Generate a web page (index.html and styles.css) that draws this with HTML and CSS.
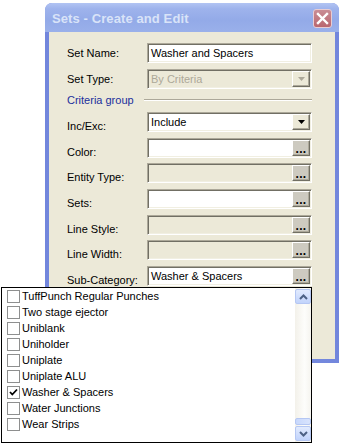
FILE: index.html
```html
<!DOCTYPE html>
<html>
<head>
<meta charset="utf-8">
<link rel="stylesheet" href="styles.css">
</head>
<body>
<div class="window">
  <div class="titlebar">
    <span class="title">Sets - Create and Edit</span>
    <span class="close"><svg width="13" height="13" viewBox="0 0 13 13"><path d="M2 2 L11 11 M11 2 L2 11" stroke="#fff" stroke-width="2.4" stroke-linecap="square"/></svg></span>
  </div>
  <div class="client">
    <div class="top">
      <div class="row"><span class="label">Set Name:</span><div class="field">Washer and Spacers</div></div>
      <div class="row"><span class="label">Set Type:</span><div class="field disabled"><span class="val">By Criteria</span><span class="dd dis"><svg width="7" height="4" viewBox="0 0 7 4"><path d="M0 0H7L3.5 4Z" fill="#aca899"/></svg></span></div></div>
    </div>
    <div class="group"><span class="gtext">Criteria group</span><span class="rule"></span></div>
    <div class="crit">
      <div class="row"><span class="label">Inc/Exc:</span><div class="field"><span class="val">Include</span><span class="dd"><svg width="7" height="4" viewBox="0 0 7 4"><path d="M0 0H7L3.5 4Z" fill="#000"/></svg></span></div></div>
      <div class="row"><span class="label">Color:</span><div class="field"><span class="val"></span><span class="btn">...</span></div></div>
      <div class="row"><span class="label">Entity Type:</span><div class="field disabled"><span class="val"></span><span class="btn">...</span></div></div>
      <div class="row"><span class="label">Sets:</span><div class="field"><span class="val"></span><span class="btn">...</span></div></div>
      <div class="row"><span class="label">Line Style:</span><div class="field disabled"><span class="val"></span><span class="btn">...</span></div></div>
      <div class="row"><span class="label">Line Width:</span><div class="field disabled"><span class="val"></span><span class="btn">...</span></div></div>
      <div class="row"><span class="label">Sub-Category:</span><div class="field"><span class="val">Washer &amp; Spacers</span><span class="btn">...</span></div></div>
    </div>
  </div>
</div>
<div class="popup">
  <div class="items">
    <div class="item"><span class="cb"></span>TuffPunch Regular Punches</div>
    <div class="item"><span class="cb"></span>Two stage ejector</div>
    <div class="item"><span class="cb"></span>Uniblank</div>
    <div class="item"><span class="cb"></span>Uniholder</div>
    <div class="item"><span class="cb"></span>Uniplate</div>
    <div class="item"><span class="cb"></span>Uniplate ALU</div>
    <div class="item"><span class="cb"><svg width="11" height="11" viewBox="0 0 11 11"><path d="M2 5 L4.3 7.5 L9 2.5" fill="none" stroke="#000" stroke-width="1.8"/></svg></span>Washer &amp; Spacers</div>
    <div class="item"><span class="cb"></span>Water Junctions</div>
    <div class="item"><span class="cb"></span>Wear Strips</div>
  </div>
  <div class="scrollbar">
    <div class="sbtn"><svg width="9" height="6" viewBox="0 0 9 6"><path d="M1 5 L4.5 1.5 L8 5" fill="none" stroke="#4d6185" stroke-width="2"/></svg></div>
    <div class="track"><div class="thumb"></div></div>
    <div class="sbtn"><svg width="9" height="6" viewBox="0 0 9 6"><path d="M1 1 L4.5 4.5 L8 1" fill="none" stroke="#4d6185" stroke-width="2"/></svg></div>
  </div>
</div>
</body>
</html>
```
FILE: styles.css
```css
html, body {
  margin: 0;
  padding: 0;
  background: #fff;
  font-family: "Liberation Sans", Arial, sans-serif;
  font-size: 11px;
  color: #000;
}
.window {
  margin: 3px 0 0 45px;
  width: 294px;
  height: 360px;
  box-sizing: border-box;
  padding: 0 4px 4px;
  background: linear-gradient(to right, #7286dc, #8095e4 50%, #7286dc);
  border-radius: 7px 7px 0 0;
  display: flex;
  flex-direction: column;
}
.titlebar {
  margin: 0 -4px;
  height: 29px;
  flex: none;
  border-radius: 7px 7px 0 0;
  background: linear-gradient(#b2c4f3, #9eb3ec 20%, #93aae8 60%, #9ab0ea);
  display: flex;
  align-items: center;
  padding: 1px 7px 0 7px;
  box-sizing: border-box;
}
.title {
  flex: 1;
  font-weight: bold;
  font-size: 13px;
  color: #d9e3f8;
  letter-spacing: 0.1px;
}
.close {
  width: 19px;
  height: 19px;
  box-sizing: border-box;
  border: 1px solid #e8ccd2;
  border-radius: 3px;
  background: linear-gradient(#c98d95, #b9666f);
  display: flex;
  align-items: center;
  justify-content: center;
}
.client {
  flex: 1;
  background: #ece9d8;
  padding: 11px 23px 0 18px;
  display: flex;
  flex-direction: column;
}
.top {
  display: flex;
  flex-direction: column;
  gap: 6px;
}
.row {
  display: flex;
  align-items: center;
  height: 20px;
}
.crit {
  display: flex;
  flex-direction: column;
  gap: 5.67px;
}
.label {
  width: 80px;
  flex: none;
}
.crit .label {
  position: relative;
  top: 4px;
}
.field {
  flex: 1;
  height: 20px;
  box-sizing: border-box;
  background: #fff;
  border: 1px solid;
  border-color: #aca899 #fff #fff #aca899;
  box-shadow: inset 1px 1px #716f64, inset -1px -1px #f1efe2;
  padding: 1px 1px 1px 3px;
  display: flex;
  align-items: center;
  white-space: nowrap;
}
.field.disabled {
  background: #ece9d8;
  color: #aca899;
}
.val { flex: 1; }
.dd, .btn {
  width: 18px;
  height: 100%;
  box-sizing: border-box;
  flex: none;
  display: flex;
  justify-content: center;
  background: #ece9d8;
  border: 1px solid;
  border-color: #fff #716f64 #716f64 #fff;
  box-shadow: inset -1px -1px #aca899;
}
.dd { align-items: center; }
.btn {
  background: #cdcac0;
  align-items: flex-end;
  font-weight: bold;
  color: #000;
  font-size: 12px;
  line-height: 10px;
  letter-spacing: 0.3px;
  padding-bottom: 1px;
}
.group {
  height: 23px;
  display: flex;
  align-items: center;
  padding-bottom: 1px;
  box-sizing: border-box;
}
.gtext {
  color: #1b2f9c;
  width: 78px;
}
.rule {
  flex: 1;
  border-top: 1px solid #aca899;
  border-bottom: 1px solid #fff;
  height: 0;
  margin-left: -1px;
}
.popup {
  position: absolute;
  left: 1px;
  top: 287px;
  width: 311px;
  height: 156px;
  box-sizing: border-box;
  border: 1px solid #000;
  background: #fff;
  display: flex;
}
.items {
  flex: 1;
  display: flex;
  flex-direction: column;
  padding-left: 5px;
}
.item {
  height: 16px;
  display: flex;
  align-items: center;
  white-space: nowrap;
  font-size: 11px;
}
.cb {
  width: 13px;
  height: 13px;
  box-sizing: border-box;
  border: 1px solid #8e8f8f;
  background: #fff;
  margin-right: 2px;
  display: flex;
  align-items: center;
  justify-content: center;
}
.scrollbar {
  width: 16px;
  flex: none;
  display: flex;
  flex-direction: column;
  background: linear-gradient(to right, #f3f1ea, #fdfdfb 60%, #f5f4ef);
}
.sbtn {
  height: 15px;
  margin: 1px 0 1px 0;
  box-sizing: border-box;
  border: 1px solid #b5c7f3;
  border-radius: 2px;
  background: linear-gradient(#e2ebfe, #c1d3fb);
  display: flex;
  align-items: center;
  justify-content: center;
}
.track {
  flex: 1;
  display: flex;
  flex-direction: column;
  justify-content: flex-end;
}
.thumb {
  height: 7px;
  box-sizing: border-box;
  border: 1px solid #b5c7f3;
  border-radius: 2px;
  background: linear-gradient(to right, #c8d8fc, #d9e4fd);
}
```
